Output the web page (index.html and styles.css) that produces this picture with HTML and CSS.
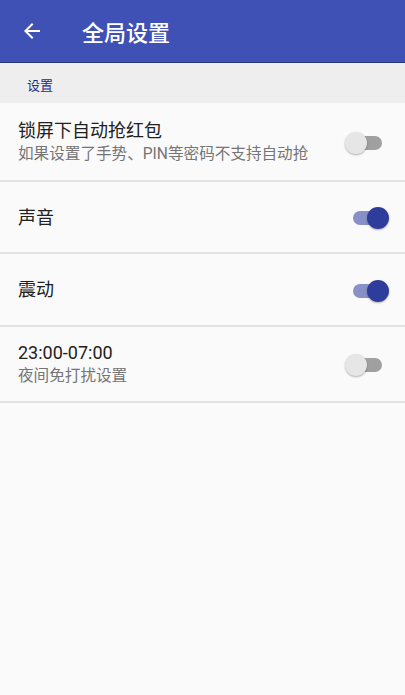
FILE: index.html
```html
<!DOCTYPE html>
<html lang="zh">
<head>
<meta charset="utf-8">
<link rel="stylesheet" href="styles.css">
</head>
<body>
<header class="appbar">
  <svg class="back" width="24" height="24" viewBox="0 0 24 24"><path d="M20 11H7.83l5.59-5.59L12 4l-8 8 8 8 1.41-1.41L7.83 13H20v-2z" fill="#fff"/></svg>
  <h1 class="title">全局设置</h1>
</header>
<div class="section">设置</div>
<div class="row r1">
  <div class="texts">
    <div class="main">锁屏下自动抢红包</div>
    <div class="sub">如果设置了手势、PIN等密码不支持自动抢</div>
  </div>
  <div class="switch"><span class="track"></span><span class="thumb"></span></div>
</div>
<div class="row r2">
  <div class="texts"><div class="main">声音</div></div>
  <div class="switch on"><span class="track"></span><span class="thumb"></span></div>
</div>
<div class="row r3">
  <div class="texts"><div class="main">震动</div></div>
  <div class="switch on"><span class="track"></span><span class="thumb"></span></div>
</div>
<div class="row r4">
  <div class="texts">
    <div class="main">23:00-07:00</div>
    <div class="sub">夜间免打扰设置</div>
  </div>
  <div class="switch"><span class="track"></span><span class="thumb"></span></div>
</div>
</body>
</html>
```
FILE: styles.css
```css
html, body { margin: 0; padding: 0; }
body {
  width: 405px;
  height: 695px;
  background: #fafafa;
  font-family: Roboto, "Noto Sans CJK SC", sans-serif;
  overflow: hidden;
}
.appbar {
  height: 62px;
  background: #3f51b5;
  border-bottom: 1px solid #2a3578;
  display: flex;
  align-items: center;
}
.back { margin-left: 20px; }
.title {
  margin: 0 0 0 38px;
  color: #fff;
  font-size: 22px;
  font-weight: 500;
}
.section {
  height: 40px;
  background: #eeeeee;
  color: #1f2a80;
  font-size: 13px;
  padding-left: 27px;
  display: flex;
  align-items: center;
  padding-top: 3px;
  box-sizing: border-box;
}
.row {
  display: flex;
  align-items: center;
  justify-content: space-between;
  padding: 0 16px 0 18px;
  border-bottom: 2px solid #e2e2e2;
  background: #fafafa;
}
.r1 { height: 77px; }
.r2 { height: 70px; }
.r3 { height: 71px; }
.r4 { height: 74px; }
.texts { display: flex; flex-direction: column; }
.main { font-size: 18px; color: #212121; line-height: 25px; }
.sub { font-size: 15.6px; color: #757575; line-height: 23px; margin-top: 0; }
.switch {
  position: relative;
  width: 44px;
  height: 24px;
  margin-top: 2px;
}
.track {
  position: absolute;
  left: 6px;
  top: 5px;
  width: 31px;
  height: 14px;
  border-radius: 7px;
  background: #a0a0a0;
}
.thumb {
  position: absolute;
  left: 0;
  top: 1px;
  width: 22px;
  height: 22px;
  border-radius: 50%;
  background: #e6e6e6;
  box-shadow: 0 1px 2px rgba(0,0,0,0.3);
}
.switch.on .track { background: #8890c8; left: 8px; }
.switch.on .thumb { left: 22px; background: #2e3d9c; }
```
